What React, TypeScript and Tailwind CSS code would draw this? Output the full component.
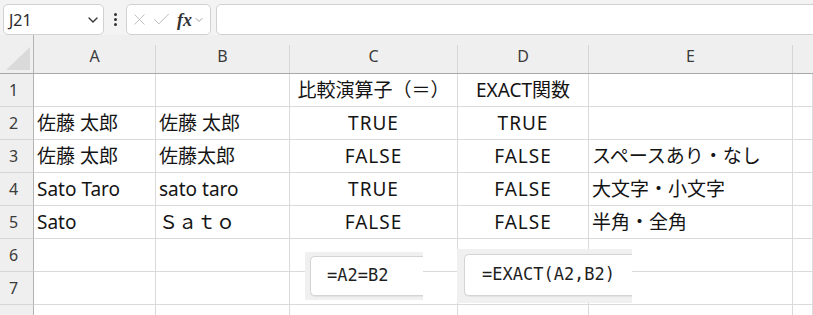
import React from "react";
import { ChevronDown, X, Check } from "lucide-react";

type Align = "left" | "center";
type Cell = { text?: string; align?: Align; spaced?: boolean };

const rows: Cell[][] = [
  [{}, {}, { text: "比較演算子（＝）", align: "center" }, { text: "EXACT関数", align: "center" }, {}, {}],
  [{ text: "佐藤 太郎" }, { text: "佐藤 太郎" }, { text: "TRUE", align: "center", spaced: true }, { text: "TRUE", align: "center", spaced: true }, {}, {}],
  [{ text: "佐藤 太郎" }, { text: "佐藤太郎" }, { text: "FALSE", align: "center", spaced: true }, { text: "FALSE", align: "center", spaced: true }, { text: "スペースあり・なし" }, {}],
  [{ text: "Sato Taro" }, { text: "sato taro" }, { text: "TRUE", align: "center", spaced: true }, { text: "FALSE", align: "center", spaced: true }, { text: "大文字・小文字" }, {}],
  [{ text: "Sato" }, { text: "Ｓａｔｏ" }, { text: "FALSE", align: "center", spaced: true }, { text: "FALSE", align: "center", spaced: true }, { text: "半角・全角" }, {}],
  [{}, {}, {}, {}, {}, {}],
  [{}, {}, {}, {}, {}, {}],
  [{}, {}, {}, {}, {}, {}],
];

const columns = ["A", "B", "C", "D", "E", ""];

const gridCols = "grid grid-cols-[34px_122px_134px_168px_131px_204px_1fr]";

function FormulaBar() {
  return (
    <div className="h-[35px] bg-[#f3f3f3] flex items-start pt-[4px] pl-[3px]">
      <div className="w-[101px] h-[31px] bg-white border border-[#d1d1d1] rounded-[5px] flex items-center pl-[5px] pr-[2px]">
        <span className="text-[16px] text-[#2b2b2b] font-['Noto_Sans',sans-serif] leading-none">J21</span>
        <ChevronDown className="ml-auto text-[#333]" size={16} strokeWidth={2} />
      </div>
      <div className="w-[22px] h-[31px] flex flex-col items-center justify-center gap-[2px]">
        <span className="w-[3px] h-[3px] bg-[#333] rounded-full" />
        <span className="w-[3px] h-[3px] bg-[#333] rounded-full" />
        <span className="w-[3px] h-[3px] bg-[#333] rounded-full" />
      </div>
      <div className="w-[85px] h-[31px] bg-white border border-[#d1d1d1] rounded-[5px] flex items-center pl-[3px]">
        <X size={19} strokeWidth={1.1} className="text-[#b8b8b8]" />
        <Check size={21} strokeWidth={1.1} className="text-[#b8b8b8] ml-[2px]" />
        <span className="ml-[5px] text-[18px] italic font-semibold text-[#333] font-['Liberation_Serif',serif] leading-none">fx</span>
        <ChevronDown size={12} strokeWidth={1.6} className="text-[#888] ml-[1px]" />
      </div>
      <div className="flex-1 h-[31px] bg-white border border-[#d1d1d1] rounded-[5px] ml-[5px] -mr-[10px]" />
    </div>
  );
}

function HeaderRow() {
  return (
    <div className={`${gridCols} h-[39px] bg-[#efefef] border-b border-[#a9a9a9]`}>
      <div className="border-r border-[#b4b4b4] flex items-end justify-end pr-[3px] pb-[3px]">
        <svg width="24" height="23" viewBox="0 0 24 23">
          <polygon points="24,0 24,23 0,23" fill="#dadada" />
        </svg>
      </div>
      {columns.map((c, i) => (
        <div key={i} className="flex h-full">
          <div className="flex-1 flex items-center justify-center text-[16px] text-[#3b3b3b] font-['Noto_Sans',sans-serif] pt-[3px]">
            {c}
          </div>
          {i < columns.length - 1 && <div className="w-px h-[28px] self-end bg-[#d6d6d6]" />}
        </div>
      ))}
    </div>
  );
}

function SheetRow({ n, cells }: { n: number | null; cells: Cell[] }) {
  return (
    <div className={`${gridCols} h-[33px]`}>
      <div className="bg-[#efefef] border-r border-b border-r-[#b4b4b4] border-b-[#d6d6d6] flex items-center justify-center pr-[6px] text-[16px] text-[#3b3b3b] font-['Noto_Sans',sans-serif]">
        {n}
      </div>
      {cells.map((c, i) => (
        <div
          key={i}
          className={`border-r border-b border-[#dadada] flex items-center overflow-hidden whitespace-pre text-[19px] text-[#141414] ${
            c.align === "center" ? "justify-center" : "justify-start pl-[3px]"
          } ${c.spaced ? "tracking-[1px]" : ""}`}
        >
          {c.text}
        </div>
      ))}
    </div>
  );
}

export default function App() {
  return (
    <div className="relative w-[813px] h-[315px] overflow-hidden bg-white font-['Noto_Sans','Noto_Sans_CJK_JP',sans-serif]">
      <FormulaBar />
      <HeaderRow />
      {rows.map((r, i) => (
        <SheetRow key={i} n={i < 7 ? i + 1 : null} cells={r} />
      ))}

      {/* formula snippets pasted onto the sheet */}
      <div className="absolute left-[305px] top-[252px] w-[118px] h-[48px] bg-[#f0f0f0] pl-[5px] pt-[4px]">
        <div className="h-[40px] bg-white border border-r-0 border-[#d4d4d4] rounded-l-[5px] shadow-[0_1px_1px_rgba(0,0,0,0.06)] flex items-center pl-[16px] text-[17px] text-[#1e1e1e] font-['DejaVu_Sans_Mono',monospace]">
          =A2=B2
        </div>
      </div>
      <div className="absolute left-[457px] top-[249px] w-[175px] h-[54px] bg-[#f0f0f0] pl-[7px] pt-[5px]">
        <div className="h-[42px] bg-white border border-r-0 border-[#d4d4d4] rounded-l-[5px] shadow-[0_1px_1px_rgba(0,0,0,0.06)] flex items-center pl-[17px] text-[17px] text-[#1e1e1e] font-['DejaVu_Sans_Mono',monospace]">
          =EXACT(A2,B2)
        </div>
      </div>
    </div>
  );
}
